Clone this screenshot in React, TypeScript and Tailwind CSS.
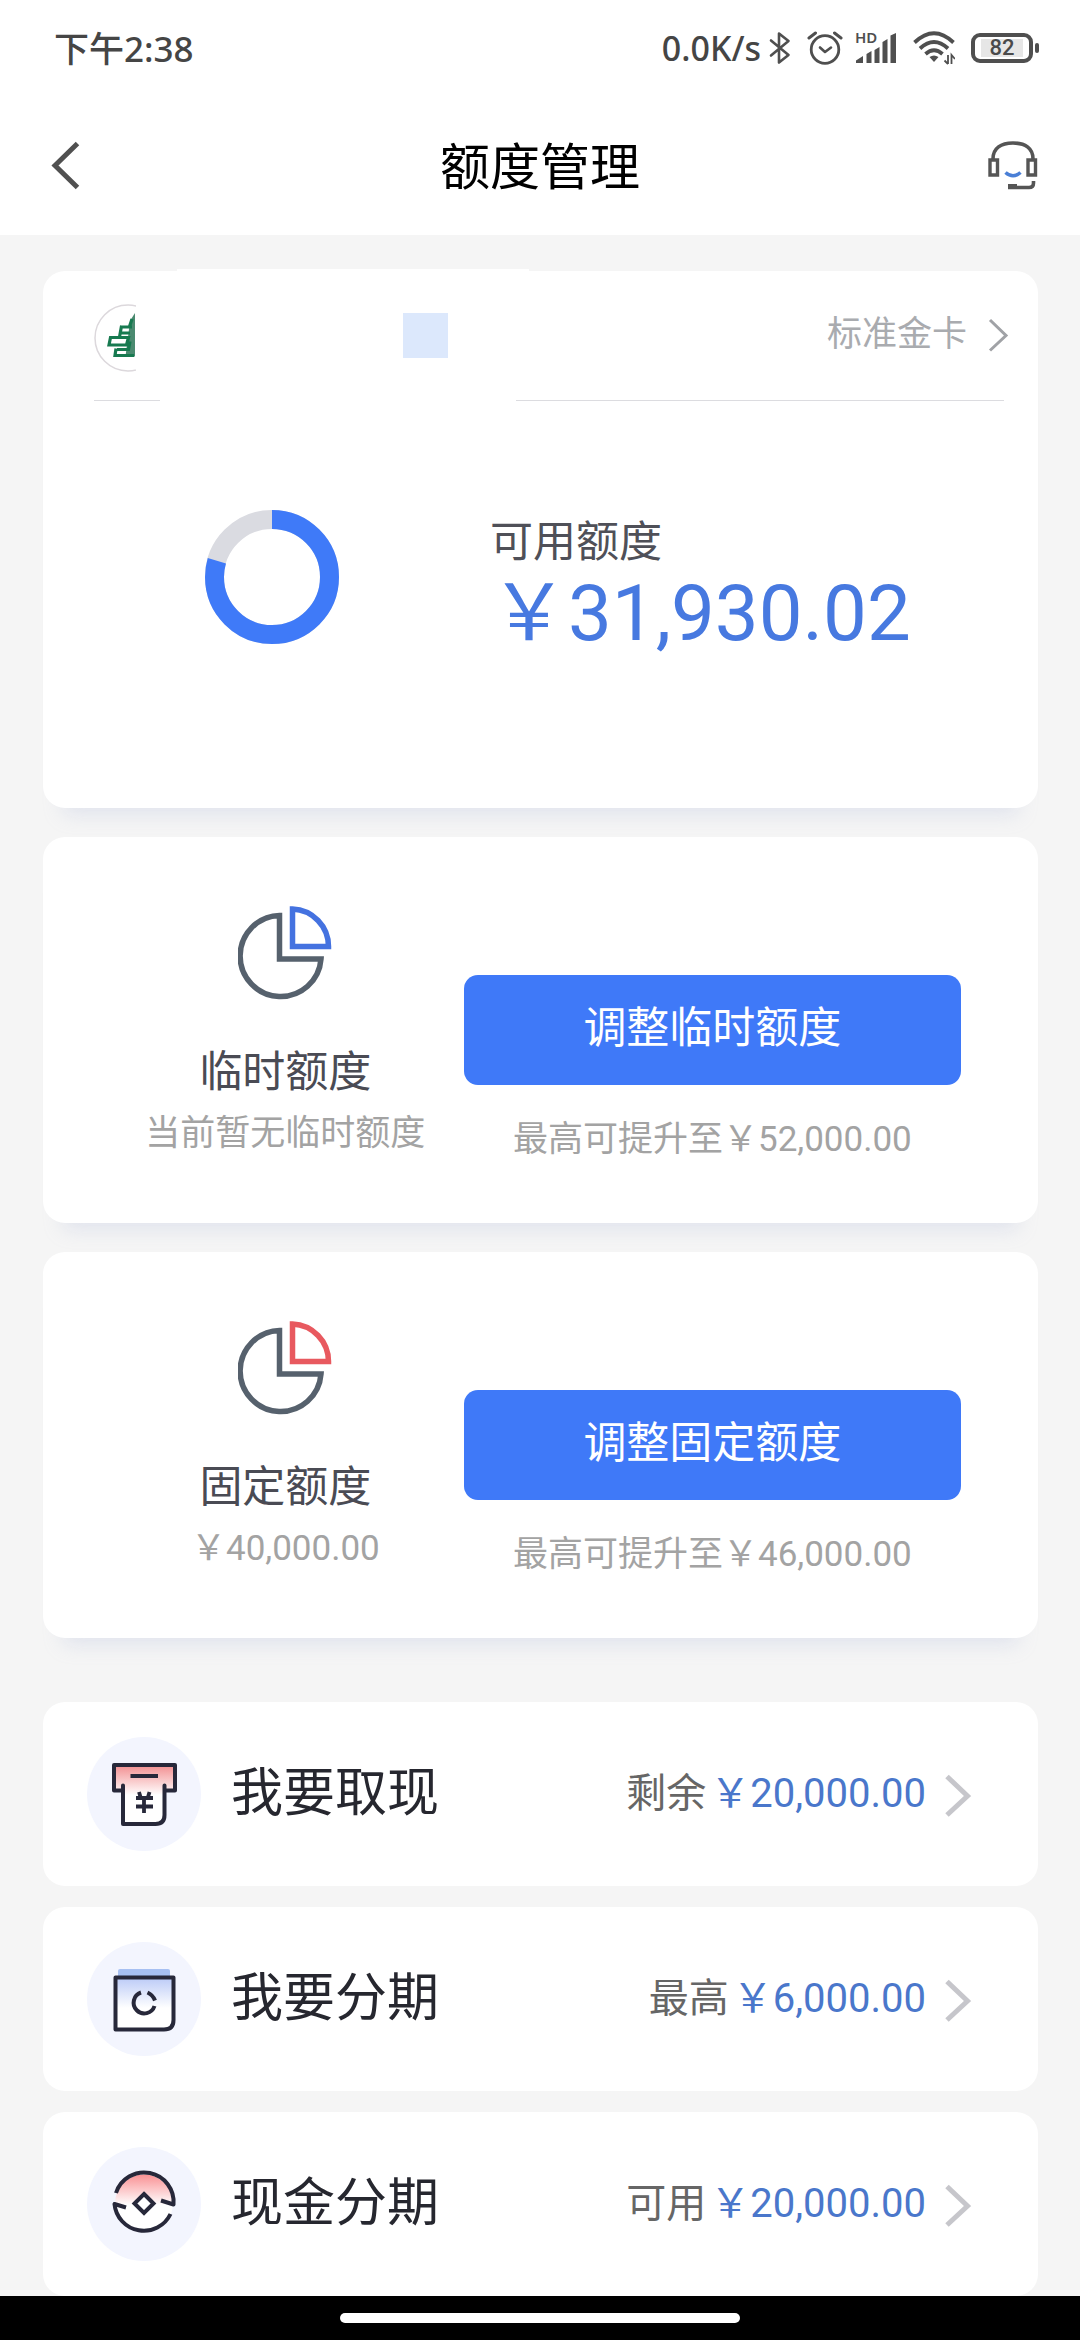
import type { ReactNode } from "react";

const fontUi = "font-['Roboto','Noto_Sans_CJK_SC',sans-serif]";
const fontStatus = "font-['Noto_Sans','Noto_Sans_CJK_SC',sans-serif]";

function BluetoothIcon() {
  return (
    <svg className="h-[34px] w-[22px]" viewBox="0 0 22 34" fill="none" stroke="#4f4f4f" strokeWidth="2.6" strokeLinejoin="round" strokeLinecap="round" aria-hidden="true">
      <path d="M2 9.5 19.5 24 10 31.5V2.5L19.5 10 2 24.5" />
    </svg>
  );
}

function AlarmIcon() {
  return (
    <svg className="h-[34px] w-[36px]" viewBox="0 0 36 34" fill="none" stroke="#4f4f4f" strokeLinecap="round" strokeLinejoin="round" aria-hidden="true">
      <circle cx="18" cy="18.5" r="13.8" strokeWidth="2.8" />
      <path d="M13 16.5 18 21l6-4.5" strokeWidth="2.6" />
      <path d="M2 7 8.5 2M34 7l-6.500-5" strokeWidth="3" />
    </svg>
  );
}

function SignalIcon() {
  return (
    <svg className="h-[44px] w-[42px]" viewBox="0 -6 42 44" fill="#4f4f4f" aria-hidden="true">
      <path d="M1 31v-2.500L8 24v7zM11.500 31V22l5-3v12zM19.500 31V18l5-3v16zM27.500 31V10l5-3v24zM35.500 31V3.500L41 1v30z" />
      <text x="0" y="11" fontSize="15" fontWeight="600" fontFamily="'Noto Sans', sans-serif">HD</text>
    </svg>
  );
}

function WifiIcon() {
  return (
    <svg className="h-[34px] w-[42px]" viewBox="0 0 42 34" fill="none" stroke="#4f4f4f" aria-hidden="true">
      <path d="M1.500 11.500Q21-7 40.500 11.500" strokeWidth="3.800" />
      <path d="M7 17.500Q21 4.500 35 17.500" strokeWidth="3.800" />
      <path d="M12.500 23Q21 15.500 29.500 23" strokeWidth="3.800" />
      <path d="M16.500 26Q21 23 25.500 26L21 31z" fill="#4f4f4f" stroke="none" />
      <path d="M35 24v9M31.500 29.500 35 33M38.500 33v-9L42 28" strokeWidth="1.800" />
    </svg>
  );
}

function Battery() {
  return (
    <div className="flex items-center gap-[2px]" aria-label="电量 82%">
      <div className="flex h-[30px] w-[62px] items-center justify-center rounded-[9px] border-4 border-[#4f4f4f]">
        <span className="flex h-[18px] w-[42px] items-center justify-center bg-[#e6e6e6] font-['Roboto',sans-serif] text-[22px] leading-none font-medium text-[#4a4a4a]">82</span>
      </div>
      <div className="h-[10px] w-1 rounded-sm bg-[#4f4f4f]" />
    </div>
  );
}

function StatusBar() {
  return (
    <div className={`flex h-24 items-center justify-between pr-[41px] pl-[54px] font-medium text-[#454545] ${fontStatus}`}>
      <span className="text-[35px] leading-none">下午2:38</span>
      <div className="flex items-center gap-4">
        <div className="flex items-center gap-2">
          <span className="text-[34px] leading-none">0.0K/s</span>
          <BluetoothIcon />
        </div>
        <div className="flex items-center gap-3">
          <AlarmIcon />
          <SignalIcon />
        </div>
        <WifiIcon />
        <Battery />
      </div>
    </div>
  );
}

function HeadsetIcon() {
  return (
    <svg className="h-[52px] w-[52px]" viewBox="0 0 52 52" fill="none" stroke="#555" strokeWidth="3.600" aria-hidden="true">
      <path d="M6 19C6 8 14 3 26 3s20 5 20 16" />
      <path d="M3 20h7.500v15H3zM41 20h7.500v15H41z" strokeWidth="3.400" />
      <path d="M46.500 41v2q0 4.500-4.500 4.500H21" />
      <path d="M21 46.500h9" strokeWidth="5" />
      <path d="M18.500 32.500q7.500 6.500 15 0" stroke="#4a7fd6" strokeWidth="3.600" />
    </svg>
  );
}

function TitleBar() {
  return (
    <div className="grid h-[139px] grid-cols-[1fr_auto_1fr] items-start px-[41px] pt-[44px]">
      <button type="button" aria-label="返回" className="justify-self-start pl-[9px]">
        <svg className="h-[50px] w-8" viewBox="0 0 32 50" fill="none" stroke="#505050" strokeWidth="5" aria-hidden="true">
          <path d="M27.500 3.500 5 25.500l22.500 22" />
        </svg>
      </button>
      <h1 className="text-[50px] leading-[56px] text-black">额度管理</h1>
      <button type="button" aria-label="客服" className="justify-self-end">
        <HeadsetIcon />
      </button>
    </div>
  );
}

function BankLogo() {
  return (
    <svg className="mt-[5px] h-[68px] w-[42px]" viewBox="0 0 42 68" fill="none" aria-hidden="true">
      <circle cx="34" cy="34" r="33" stroke="#dcd8dc" strokeWidth="1.500" />
      <path d="M41 9 36.500 16l-1 5-4 31.500H41z" fill="#4b8a70" />
      <path d="M26 23h12M25 29h11M27.500 22 25.500 33M38 15l-3 9" stroke="#177a50" strokeWidth="3.200" />
      <path d="M16.500 33.500h18l-2 7.500H15z" stroke="#177a50" strokeWidth="3.200" />
      <path d="M22 44.500 21 51.500h19M23 45.500h11.500l1.500-8" stroke="#177a50" strokeWidth="3.200" />
    </svg>
  );
}

function QuotaRing({ share }: { share: number }) {
  return (
    <svg className="size-[134px]" viewBox="0 0 134 134" fill="none" strokeWidth="19" role="img" aria-label="可用额度占比">
      <circle cx="67" cy="67" r="57.500" stroke="#dadbe1" />
      <circle cx="67" cy="67" r="57.500" stroke="#3f7af8" pathLength={100} strokeDasharray={`${share} 100`} transform="rotate(-90 67 67)" />
    </svg>
  );
}

const cardShadow = "shadow-[0_26px_20px_-20px_rgba(170,180,215,0.28)]";

function OverviewCard() {
  return (
    <section className={`relative h-[537px] rounded-[22px] bg-white ${cardShadow}`}>
      <div className="absolute -top-0.5 left-[134px] h-1 w-[352px] bg-white" />
      <div className="flex h-[129px] items-center pr-[27px] pl-[51px]">
        <BankLogo />
        <div className="ml-[267px] size-[45px] bg-[#dce8fc]" />
        <a href="#card" className="ml-auto flex items-center pb-0.5 text-[35px] leading-[46px] text-[#a9abaf]">
          标准金卡
          <svg className="ml-[20px] h-9 w-6" viewBox="0 0 24 36" fill="none" stroke="#a0a2a6" strokeWidth="3" aria-hidden="true">
            <path d="M3 3l16 15.500L3 33.500" />
          </svg>
        </a>
      </div>
      <div className="flex justify-between pr-[34px] pl-[51px]">
        <div className="h-px w-[66px] bg-[#dcdce0]" />
        <div className="ml-[356px] h-px flex-1 bg-[#dcdce0]" />
      </div>
      <div className="flex items-start pt-[109px] pl-[162px]">
        <QuotaRing share={79.600} />
        <dl className="ml-[151px]">
          <dt className="text-[43px] leading-[64px] text-[#4f5058]">可用额度</dt>
          <dd className="text-[78px] leading-[80px] text-[#4779e0]">￥31,930.02</dd>
        </dl>
      </div>
    </section>
  );
}

function PieIcon({ accent }: { accent: string }) {
  return (
    <svg className="h-[96px] w-[94px]" viewBox="0 0 94 96" fill="none" strokeWidth="5.500" aria-hidden="true">
      <path d="M41.500 10.500A40.500 40.500 0 1 0 83 54H41.500z" stroke="#56616d" />
      <path d="M54.500 4A37.500 37.500 0 0 1 90.500 41.500H54.500z" stroke={accent} />
    </svg>
  );
}

type LimitProps = { title: string; current: string; action: string; ceiling: string; accent: string };

function LimitCard({ title, current, action, ceiling, accent }: LimitProps) {
  return (
    <section className={`grid h-[386px] grid-cols-[11fr_13fr] items-start rounded-[22px] bg-white pr-[77px] ${cardShadow}`}>
      <div className="flex flex-col items-center pt-[68px] pl-16">
        <PieIcon accent={accent} />
        <h2 className="mt-[41px] text-[43px] leading-[60px] text-[#4a4b54]">{title}</h2>
        <p className="mt-2 text-[35px] leading-[48px] whitespace-nowrap text-[#a3a3a3]">{current}</p>
      </div>
      <div className="pt-[138px] text-center">
        <button type="button" className="h-[110px] w-full rounded-[14px] bg-[#3f79f8] pb-1 text-[43px] leading-none text-white">
          {action}
        </button>
        <p className="mt-[31px] text-[35px] leading-[48px] whitespace-nowrap text-[#a3a3a3]">{ceiling}</p>
      </div>
    </section>
  );
}

const ink = "#27283a";

function CashIcon() {
  return (
    <svg className="size-[114px]" viewBox="0 0 114 114" fill="none" stroke={ink} strokeWidth="4" strokeLinejoin="round" strokeLinecap="round" aria-hidden="true">
      <defs>
        <linearGradient id="cash-fill" x1="0" y1="27" x2="0" y2="58" gradientUnits="userSpaceOnUse">
          <stop stopColor="#f28a8c" />
          <stop offset="1" stopColor="#fff" />
        </linearGradient>
      </defs>
      <path d="M27 28h61v25.500H77.500V78q0 9-9 9H36V53.500h-9z" fill="url(#cash-fill)" stroke="none" />
      <path d="M36 53.500h-9V28h61v25.500H78" />
      <path d="M36 48.500V87h32.500q9 0 9-9V48.500" />
      <path d="M43.500 39H71" strokeLinecap="butt" />
      <path d="M52 55l1.500 5M62.500 55 61 60M49 61h17M49 69.500h17M57 61v15" strokeWidth="3.800" strokeLinecap="butt" />
    </svg>
  );
}

function InstallmentIcon() {
  return (
    <svg className="size-[114px]" viewBox="0 0 114 114" fill="none" stroke={ink} strokeWidth="4" strokeLinejoin="round" aria-hidden="true">
      <defs>
        <linearGradient id="installment-fill" x1="0" y1="36" x2="0" y2="66" gradientUnits="userSpaceOnUse">
          <stop stopColor="#bccbf7" />
          <stop offset="1" stopColor="#fff" />
        </linearGradient>
      </defs>
      <path d="M31 35v-6q0-2 2-2h48q2 0 2 2v6z" fill="#a7c0f2" stroke="none" />
      <path d="M28.500 35.500h58V78q0 9.500-9.500 9.500H28.500z" fill="url(#installment-fill)" />
      <path d="M54 50.500A10.700 10.700 0 1 0 67.500 64" />
      <path d="M60.500 50.500Q66 53 68 58.500" />
    </svg>
  );
}

function CoinIcon() {
  return (
    <svg className="size-[114px]" viewBox="0 0 114 114" fill="none" stroke={ink} strokeWidth="4" strokeLinejoin="round" aria-hidden="true">
      <defs>
        <linearGradient id="coin-fill" x1="0" y1="27" x2="0" y2="58" gradientUnits="userSpaceOnUse">
          <stop stopColor="#f98f92" />
          <stop offset="1" stopColor="#fff" />
        </linearGradient>
      </defs>
      <circle cx="57" cy="56.500" r="29" fill="url(#coin-fill)" stroke="none" />
      <path d="M29 46A29.500 29.500 0 0 1 86.500 57.500L74 53.500" />
      <path d="M39 60.500 27.500 57A29.500 29.500 0 0 0 83.500 67" />
      <path d="M57 47l9.500 9.500L57 66l-9.500-9.500z" fill="#fff" strokeLinejoin="miter" />
    </svg>
  );
}

type ServiceProps = { icon: ReactNode; name: string; label: string; amount: string };

function ServiceRow({ icon, name, label, amount }: ServiceProps) {
  return (
    <li>
      <a href={`#${name}`} className="flex h-[184px] items-center rounded-[22px] bg-white pr-[66px] pl-[44px]">
        <span className="rounded-full bg-[#f3f5fe]">{icon}</span>
        <span className="ml-[30px] text-[52px] leading-[64px] text-[#26272f]">{name}</span>
        <span className="ml-auto text-[40px] leading-[52px] text-[#666]">{label}</span>
        <span className="ml-1 text-[40px] leading-[52px] text-[#4a77cb]">{amount}</span>
        <svg className="ml-[18px] h-[46px] w-[28px]" viewBox="0 0 28 46" fill="none" stroke="#c6c6cb" strokeWidth="5" aria-hidden="true">
          <path d="M3 5.500l20.500 19.500L3 44" />
        </svg>
      </a>
    </li>
  );
}

export default function App() {
  return (
    <div lang="zh-CN" className={`flex min-h-screen flex-col bg-[#f5f5f5] ${fontUi}`}>
      <header className="bg-white">
        <StatusBar />
        <TitleBar />
      </header>
      <main className="flex-1 pt-9 pr-[42px] pl-[43px]">
        <div className="flex flex-col gap-[29px]">
          <OverviewCard />
          <LimitCard title="临时额度" current="当前暂无临时额度" action="调整临时额度" ceiling="最高可提升至￥52,000.00" accent="#4472e0" />
          <LimitCard title="固定额度" current="￥40,000.00" action="调整固定额度" ceiling="最高可提升至￥46,000.00" accent="#e8595f" />
        </div>
        <ul className="mt-16 flex flex-col gap-[21px]">
          <ServiceRow icon={<CashIcon />} name="我要取现" label="剩余" amount="￥20,000.00" />
          <ServiceRow icon={<InstallmentIcon />} name="我要分期" label="最高" amount="￥6,000.00" />
          <ServiceRow icon={<CoinIcon />} name="现金分期" label="可用" amount="￥20,000.00" />
        </ul>
      </main>
      <div className="flex h-11 items-center justify-center bg-black">
        <div className="h-[10px] w-[400px] rounded-full bg-white" />
      </div>
    </div>
  );
}
